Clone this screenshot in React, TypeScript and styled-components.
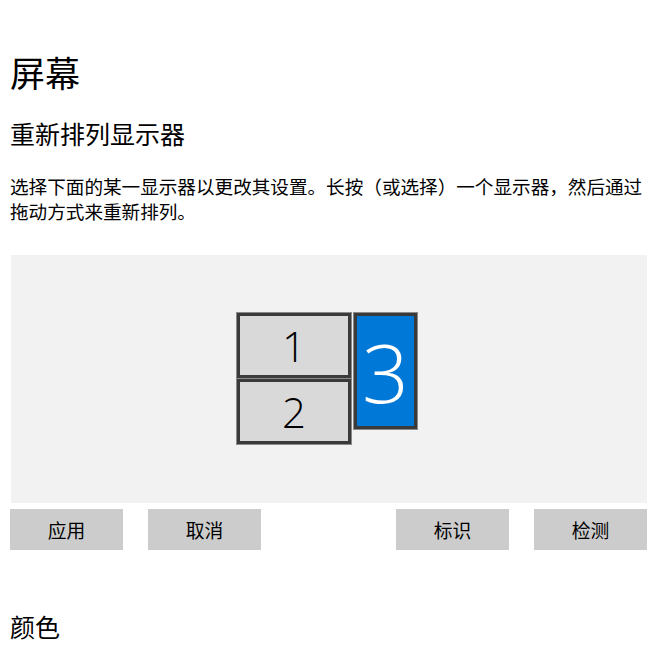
import React from "react";
import styled, { createGlobalStyle } from "styled-components";

const Global = createGlobalStyle`
  html, body { margin: 0; padding: 0; background: #fff; }
  body { font-family: "Noto Sans CJK SC", "Noto Sans", sans-serif; color: #000; }
`;

const Page = styled.div`
  padding: 47px 20px 0 10px;
  width: 637px;
`;

const Title = styled.h1`
  margin: 0;
  font-size: 35px;
  font-weight: 400;
  line-height: 50px;
`;

const SubTitle = styled.h2`
  margin: 19px 0 0;
  font-size: 25px;
  font-weight: 400;
  line-height: 34px;
`;

const Desc = styled.p`
  margin: 23px 0 0;
  width: 650px;
  font-size: 18.6px;
  line-height: 25px;
`;

const Canvas = styled.div`
  position: relative;
  margin: 32px 0 0 1px;
  height: 248px;
  background: #f2f2f2;
`;

const Monitor = styled.div<{ $active?: boolean }>`
  position: absolute;
  box-sizing: border-box;
  display: flex;
  align-items: center;
  justify-content: center;
  border: 3px solid #3a3a3a;
  outline: 1px solid #8a8a8a;
  background: ${(p) => (p.$active ? "#0078d7" : "#d9d9d9")};
  color: ${(p) => (p.$active ? "#fff" : "#000")};
  font-family: "Open Sans", "Noto Sans", sans-serif;
  font-weight: 300;
  font-size: ${(p) => (p.$active ? "82px" : "42px")};
  line-height: 1;
`;

const ButtonRow = styled.div`
  display: flex;
  justify-content: space-between;
  margin-top: 6px;
`;

const ButtonGroup = styled.div`
  display: flex;
  gap: 25px;
`;

const Button = styled.button`
  width: 113px;
  height: 41px;
  border: none;
  padding: 0;
  background: #cccccc;
  font-family: "Noto Sans CJK SC", "Noto Sans", sans-serif;
  font-size: 18.75px;
  color: #000;
`;

const Section = styled.h2`
  margin: 59px 0 0;
  font-size: 25px;
  font-weight: 400;
  line-height: 34px;
`;

const monitors = [
  { id: 1, left: 226, top: 58, w: 114, h: 65 },
  { id: 2, left: 226, top: 124, w: 114, h: 65 },
  { id: 3, left: 343, top: 58, w: 63, h: 116, active: true },
];

export default function App() {
  return (
    <>
      <Global />
      <Page>
        <Title>屏幕</Title>
        <SubTitle>重新排列显示器</SubTitle>
        <Desc>
          选择下面的某一显示器以更改其设置。长按（或选择）一个显示器，然后通过拖动方式来重新排列。
        </Desc>
        <Canvas>
          {monitors.map((m) => (
            <Monitor
              key={m.id}
              $active={m.active}
              style={{ left: m.left, top: m.top, width: m.w, height: m.h }}
            >
              {m.id}
            </Monitor>
          ))}
        </Canvas>
        <ButtonRow>
          <ButtonGroup>
            <Button>应用</Button>
            <Button>取消</Button>
          </ButtonGroup>
          <ButtonGroup>
            <Button>标识</Button>
            <Button>检测</Button>
          </ButtonGroup>
        </ButtonRow>
        <Section>颜色</Section>
      </Page>
    </>
  );
}
